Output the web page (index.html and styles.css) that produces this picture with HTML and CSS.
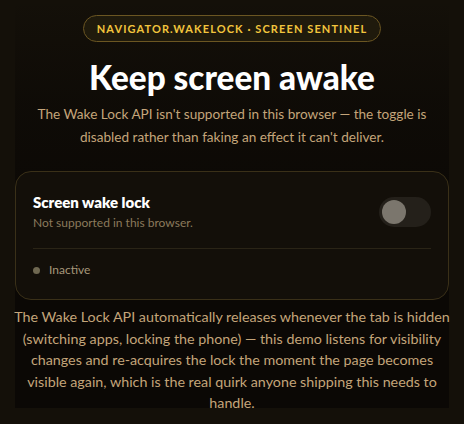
FILE: index.html
```html
<!DOCTYPE html>
<html lang="en">
<head>
<meta charset="utf-8">
<title>Keep screen awake</title>
<link rel="stylesheet" href="styles.css">
</head>
<body>
<main class="page">
  <div class="badge">navigator.wakeLock · Screen Sentinel</div>
  <h1 class="title">Keep screen awake</h1>
  <p class="lead">The Wake Lock API isn't supported in this browser — the toggle is disabled rather than faking an effect it can't deliver.</p>
  <section class="card">
    <div class="card-row">
      <div class="card-text">
        <div class="card-title">Screen wake lock</div>
        <div class="card-sub">Not supported in this browser.</div>
      </div>
      <button class="toggle" disabled aria-label="Screen wake lock"><span class="knob"></span></button>
    </div>
    <div class="status"><span class="dot"></span><span class="status-text">Inactive</span></div>
  </section>
  <p class="note">The Wake Lock API automatically releases whenever the tab is hidden (switching apps, locking the phone) — this demo listens for visibility changes and re-acquires the lock the moment the page becomes visible again, which is the real quirk anyone shipping this needs to handle.</p>
</main>
</body>
</html>
```
FILE: styles.css
```css
html, body {
  margin: 0;
  padding: 0;
}
body {
  background: #141009;
  font-family: Lato, "Open Sans", sans-serif;
  color: #c9ab7c;
  height: 424px;
  overflow: hidden;
}
.page {
  width: 434px;
  margin: 0 auto;
  height: 408px;
  box-sizing: border-box;
  padding-top: 15px;
  display: flex;
  flex-direction: column;
  align-items: center;
  background: linear-gradient(to bottom, rgba(11, 8, 5, 0) 0%, rgba(11, 8, 5, 0.6) 25%, #0b0805 60%, #0b0805 100%);
}
.page > * {
  flex-shrink: 0;
}
.badge {
  box-sizing: border-box;
  height: 27px;
  padding: 0 13px;
  display: flex;
  align-items: center;
  border: 1px solid #6b5622;
  border-radius: 14px;
  background: #1f1a0c;
  color: #f2c53d;
  font-size: 11px;
  font-weight: 700;
  letter-spacing: 1.1px;
  text-transform: uppercase;
}
.title {
  margin: 15px 0 0;
  font-size: 33.3px;
  font-weight: 900;
  color: #ffffff;
  line-height: 40px;
}
.lead {
  margin: 6px 0 0;
  text-align: center;
  font-size: 13.6px;
  line-height: 23px;
  color: #c4a57a;
  width: 420px;
}
.card {
  box-sizing: border-box;
  width: 434px;
  margin-top: 22px;
  border: 1px solid #3a3018;
  border-radius: 16px;
  background: #130f09;
  padding: 20px 17px 21px;
}
.card-row {
  display: flex;
  align-items: center;
  justify-content: space-between;
  padding-bottom: 16px;
  border-bottom: 1px solid #2a2416;
}
.card-title {
  font-size: 15px;
  font-weight: 800;
  color: #ffffff;
  line-height: 20px;
}
.card-sub {
  font-size: 12px;
  color: #8b7a5c;
  line-height: 18px;
  margin-top: 2px;
}
.toggle {
  width: 52px;
  height: 30px;
  border: 0;
  padding: 0 0 0 3px;
  border-radius: 15px;
  background: #24201a;
  display: flex;
  align-items: center;
}
.knob {
  width: 24px;
  height: 24px;
  border-radius: 50%;
  background: #7b766d;
}
.status {
  display: flex;
  align-items: center;
  gap: 9px;
  margin-top: 13px;
  font-size: 12px;
  line-height: 16px;
  color: #a6977a;
}
.dot {
  width: 7px;
  height: 7px;
  border-radius: 50%;
  background: #6f6851;
}
.note {
  margin: 6px -4px 0;
  text-align: center;
  font-size: 14.3px;
  line-height: 21.5px;
  color: #c4a57a;
  width: 442px;
}
```
